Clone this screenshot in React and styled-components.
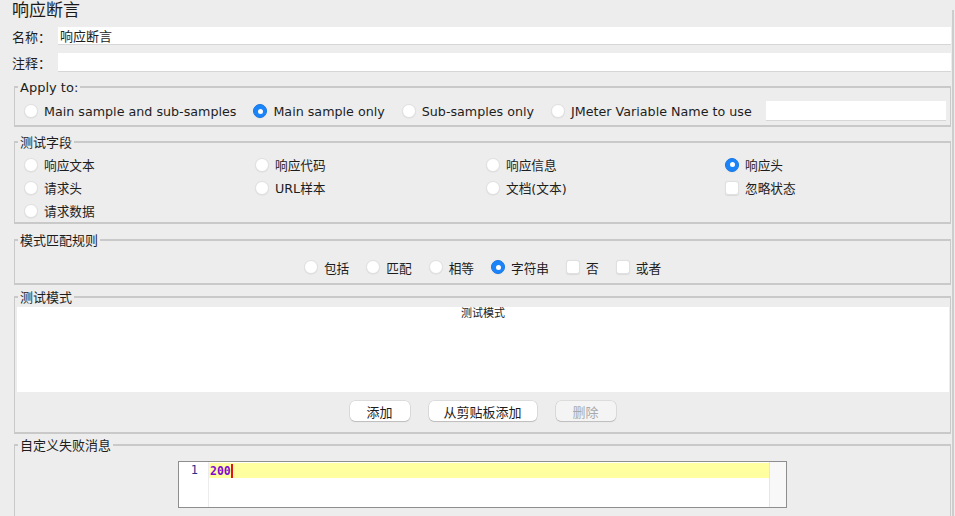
import React from "react";
import styled, { createGlobalStyle } from "styled-components";

const GlobalStyle = createGlobalStyle`
  html, body {
    margin: 0;
    padding: 0;
    background: #ededed;
  }
  body {
    font-family: "DejaVu Sans", "Noto Sans CJK SC", sans-serif;
    font-size: 12.7px;
    color: #1d1d1d;
  }
`;

const Page = styled.div`
  display: flex;
  height: 516px;
  overflow: hidden;
`;

const Main = styled.div`
  width: 951px;
  flex: none;
  box-sizing: border-box;
  padding-left: 12px;
  display: flex;
  flex-direction: column;
`;

const ScrollEdge = styled.div`
  width: 2px;
  margin: 10px 0 0 1px;
  background: #cdcdcd;
`;

const Title = styled.div`
  font-size: 17px;
  line-height: 20px;
  height: 20px;
  color: #1a1a1a;
`;

const FieldRow = styled.div`
  display: flex;
  align-items: center;
  height: ${(p) => p.$h}px;
  margin-top: ${(p) => p.$top}px;
`;

const Label = styled.span`
  width: 46px;
  flex: none;
  font-size: 13px;
`;

const TextInput = styled.div`
  flex: 1;
  align-self: stretch;
  display: flex;
  align-items: center;
  padding-left: 2px;
  background: #fff;
  border-bottom: 1px solid #d6d6d6;
  font-size: 13px;
`;

const Group = styled.fieldset`
  margin: ${(p) => p.$top}px 0 0 2px;
  padding: ${(p) => p.$pad};
  border: 1px solid #c9c9c9;
  border-top-width: 2px;
  border-bottom-width: 2px;
  min-width: 0;
`;

const Legend = styled.legend`
  margin-left: 3px;
  padding: 3px 2px 0;
  font-size: 13px;
  line-height: 16px;
  color: #1d1d1d;
`;

const ApplyRow = styled.div`
  display: flex;
  align-items: center;
  gap: 17px;
  height: 20px;
  padding-left: 9px;
`;

const Choice = styled.label`
  display: flex;
  align-items: center;
  gap: 6px;
  white-space: nowrap;
`;

const RadioDot = styled.span`
  width: 14px;
  height: 14px;
  flex: none;
  box-sizing: border-box;
  border-radius: 50%;
  background: ${(p) => (p.$on ? "#1b84f9" : "#fff")};
  border: 1px solid ${(p) => (p.$on ? "#1577e6" : "#e0e0e0")};
  box-shadow: 0 0.5px 1px rgba(0, 0, 0, 0.08);
  display: flex;
  align-items: center;
  justify-content: center;

  &::after {
    content: "";
    width: 5px;
    height: 5px;
    border-radius: 50%;
    background: #fff;
    display: ${(p) => (p.$on ? "block" : "none")};
  }
`;

const CheckBox = styled.span`
  width: 14px;
  height: 14px;
  flex: none;
  box-sizing: border-box;
  border-radius: 3px;
  background: #fff;
  border: 1px solid #e0e0e0;
  box-shadow: 0 0.5px 1px rgba(0, 0, 0, 0.08);
`;

const VarInput = styled.div`
  flex: 1;
  height: 19px;
  margin-left: -3px;
  margin-right: 4px;
  background: #fff;
  border-bottom: 1px solid #d6d6d6;
`;

const FieldGrid = styled.div`
  display: grid;
  grid-template-columns: 231px 231px 239px 1fr;
  grid-auto-rows: 23px;
  align-items: center;
  padding-left: 9px;
`;

const PatternRow = styled.div`
  display: flex;
  justify-content: center;
  align-items: center;
  gap: 17px;
  height: 20px;
`;

const Table = styled.div`
  margin: 0 1px 0 2px;
  height: 85px;
  background: #fff;
`;

const TableHead = styled.div`
  height: 14px;
  line-height: 14px;
  text-align: center;
  font-size: 11px;
  color: #222;
`;

const ButtonRow = styled.div`
  display: flex;
  justify-content: center;
  gap: 19px;
  margin-top: 9px;
`;

const Button = styled.button`
  width: ${(p) => p.$w}px;
  height: 20px;
  padding: 0;
  border: none;
  border-radius: 5px;
  background: ${(p) => (p.disabled ? "#f4f4f4" : "#fff")};
  color: ${(p) => (p.disabled ? "#a9a9a9" : "#1d1d1d")};
  box-shadow: 0 0 0 0.5px rgba(0, 0, 0, 0.14), 0 1px 1px rgba(0, 0, 0, 0.14);
  font-family: "DejaVu Sans", "Noto Sans CJK SC", sans-serif;
  font-size: 13px;
`;

const Editor = styled.div`
  width: 609px;
  height: 47px;
  box-sizing: border-box;
  margin: 0 auto;
  display: flex;
  background: #fff;
  border: 1px solid #8e8e8e;
`;

const Gutter = styled.div`
  width: 30px;
  box-sizing: border-box;
  padding: 1px 10px 0 0;
  text-align: right;
  border-right: 1px solid #ececec;
  font-family: "DejaVu Sans Mono", monospace;
  font-size: 12px;
  line-height: 15px;
  color: #24358e;
`;

const Code = styled.div`
  flex: 1;
  padding-top: 1px;
`;

const CodeLine = styled.div`
  height: 15px;
  display: flex;
  align-items: center;
  padding-left: 1px;
  background: #ffffa0;
  font-family: "DejaVu Sans Mono", monospace;
  font-weight: bold;
  font-size: 11.5px;
  color: #8008d2;
`;

const Caret = styled.span`
  width: 2px;
  height: 14px;
  background: #e3141a;
`;

const Track = styled.div`
  width: 16px;
  background: #f8f8f8;
  border-left: 1px solid #e6e6e6;
`;

const Radio = ({ on, children }) => (
  <Choice>
    <RadioDot $on={on} />
    {children}
  </Choice>
);

const Check = ({ children }) => (
  <Choice>
    <CheckBox />
    {children}
  </Choice>
);

const fields = [
  ["响应文本", false, "radio"],
  ["响应代码", false, "radio"],
  ["响应信息", false, "radio"],
  ["响应头", true, "radio"],
  ["请求头", false, "radio"],
  ["URL样本", false, "radio"],
  ["文档(文本)", false, "radio"],
  ["忽略状态", false, "check"],
  ["请求数据", false, "radio"],
];

export default function App() {
  return (
    <>
      <GlobalStyle />
      <Page>
        <Main>
          <Title>响应断言</Title>
          <FieldRow $h={18} $top={7}>
            <Label>名称：</Label>
            <TextInput>响应断言</TextInput>
          </FieldRow>
          <FieldRow $h={20} $top={8}>
            <Label>注释：</Label>
            <TextInput />
          </FieldRow>

          <Group $top={5} $pad="5px 0 4px 0">
            <Legend>Apply to:</Legend>
            <ApplyRow>
              <Radio>Main sample and sub-samples</Radio>
              <Radio on>Main sample only</Radio>
              <Radio>Sub-samples only</Radio>
              <Radio>JMeter Variable Name to use</Radio>
              <VarInput />
            </ApplyRow>
          </Group>

          <Group $top={5} $pad="2px 0 0 0">
            <Legend>测试字段</Legend>
            <FieldGrid>
              {fields.map(([text, on, kind]) =>
                kind === "check" ? (
                  <Check key={text}>{text}</Check>
                ) : (
                  <Radio key={text} on={on}>
                    {text}
                  </Radio>
                )
              )}
            </FieldGrid>
          </Group>

          <Group $top={6} $pad="8px 0 6px 0">
            <Legend>模式匹配规则</Legend>
            <PatternRow>
              <Radio>包括</Radio>
              <Radio>匹配</Radio>
              <Radio>相等</Radio>
              <Radio on>字符串</Radio>
              <Check>否</Check>
              <Check>或者</Check>
            </PatternRow>
          </Group>

          <Group $top={2} $pad="1px 0 11px 0">
            <Legend>测试模式</Legend>
            <Table>
              <TableHead>测试模式</TableHead>
            </Table>
            <ButtonRow>
              <Button $w={60}>添加</Button>
              <Button $w={108}>从剪贴板添加</Button>
              <Button $w={60} disabled>
                删除
              </Button>
            </ButtonRow>
          </Group>

          <Group $top={1} $pad="7px 0 30px 0">
            <Legend>自定义失败消息</Legend>
            <Editor>
              <Gutter>1</Gutter>
              <Code>
                <CodeLine>
                  200
                  <Caret />
                </CodeLine>
              </Code>
              <Track />
            </Editor>
          </Group>
        </Main>
        <ScrollEdge />
      </Page>
    </>
  );
}
